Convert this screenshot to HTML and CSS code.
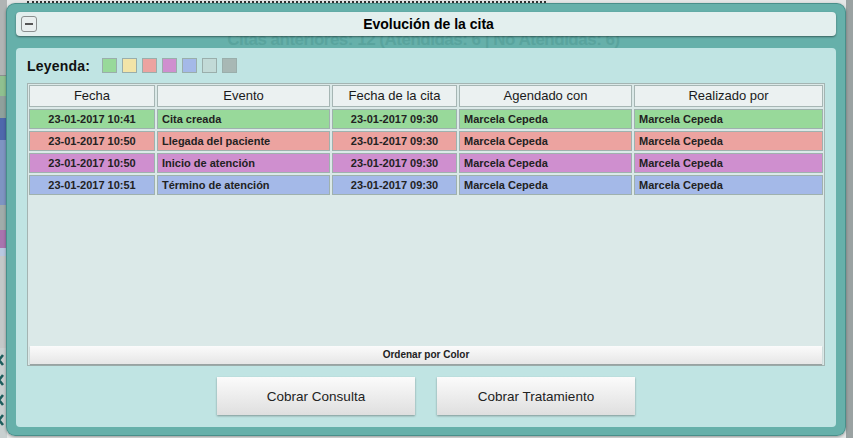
FILE: index.html
```html
<!DOCTYPE html>
<html lang="es">
<head>
<meta charset="utf-8">
<title>Evolución de la cita</title>
<link rel="stylesheet" href="styles.css">
</head>
<body>
<div class="page">
  <div class="strip-left">
    <span class="seg s-gray"></span>
    <span class="seg s-green"></span>
    <span class="seg s-sage"></span>
    <span class="seg s-navy"></span>
    <span class="seg s-blue"></span>
    <span class="seg s-grey2"></span>
    <span class="seg s-purple"></span>
    <span class="seg s-light"></span>
    <span class="seg s-grey3"></span>
    <span class="seg s-icons">
      <svg class="chev" width="7" height="12" viewBox="0 0 7 12"><path d="M5 1 L1 6 L5 11" fill="none" stroke="#1d5d5c" stroke-width="2.6"/></svg>
      <svg class="chev" width="7" height="12" viewBox="0 0 7 12"><path d="M5 1 L1 6 L5 11" fill="none" stroke="#1d5d5c" stroke-width="2.6"/></svg>
      <svg class="chev" width="7" height="12" viewBox="0 0 7 12"><path d="M5 1 L1 6 L5 11" fill="none" stroke="#1d5d5c" stroke-width="2.6"/></svg>
      <svg class="chev" width="7" height="12" viewBox="0 0 7 12"><path d="M5 1 L1 6 L5 11" fill="none" stroke="#1d5d5c" stroke-width="2.6"/></svg>
    </span>
  </div>
  <div class="page-main">
    <div class="page-top"></div>
    <h2 class="page-heading">Citas anteriores: 12 (Atendidas: 6 | No Atendidas: 6)</h2>
  </div>
  <div class="strip-right"></div>
</div>

<div class="modal">
  <div class="titlebar">
    <span class="minimize"><span class="minus"></span></span>
    <span class="title">Evolución de la cita</span>
    <span></span>
  </div>
  <div class="panel">
    <div class="legend">
      <span class="legend-label">Leyenda:</span>
      <span class="sw c-green"></span>
      <span class="sw c-yellow"></span>
      <span class="sw c-pink"></span>
      <span class="sw c-purple"></span>
      <span class="sw c-blue"></span>
      <span class="sw c-light"></span>
      <span class="sw c-gray"></span>
    </div>
    <div class="tablebox">
      <div class="grid">
        <div class="th">Fecha</div>
        <div class="th">Evento</div>
        <div class="th">Fecha de la cita</div>
        <div class="th">Agendado con</div>
        <div class="th">Realizado por</div>

        <div class="td center c-green">23-01-2017 10:41</div>
        <div class="td c-green">Cita creada</div>
        <div class="td center c-green">23-01-2017 09:30</div>
        <div class="td c-green">Marcela Cepeda</div>
        <div class="td c-green">Marcela Cepeda</div>

        <div class="td center c-pink">23-01-2017 10:50</div>
        <div class="td c-pink">Llegada del paciente</div>
        <div class="td center c-pink">23-01-2017 09:30</div>
        <div class="td c-pink">Marcela Cepeda</div>
        <div class="td c-pink">Marcela Cepeda</div>

        <div class="td center c-purple">23-01-2017 10:50</div>
        <div class="td c-purple">Inicio de atención</div>
        <div class="td center c-purple">23-01-2017 09:30</div>
        <div class="td c-purple">Marcela Cepeda</div>
        <div class="td c-purple">Marcela Cepeda</div>

        <div class="td center c-blue">23-01-2017 10:51</div>
        <div class="td c-blue">Término de atención</div>
        <div class="td center c-blue">23-01-2017 09:30</div>
        <div class="td c-blue">Marcela Cepeda</div>
        <div class="td c-blue">Marcela Cepeda</div>
      </div>
      <div class="sortbar">Ordenar por Color</div>
    </div>
    <div class="actions">
      <button class="btn">Cobrar Consulta</button>
      <button class="btn">Cobrar Tratamiento</button>
    </div>
  </div>
</div>
</body>
</html>
```

FILE: styles.css
```css
* { box-sizing: border-box; }

html, body {
  margin: 0;
  padding: 0;
  width: 853px;
  height: 438px;
  overflow: hidden;
  font-family: "Liberation Sans", Arial, sans-serif;
}

body { background: #d8dcdc; }

/* background page */
.page {
  display: flex;
  height: 438px;
}

.strip-left {
  width: 7px;
  display: flex;
  flex-direction: column;
}

.seg { display: block; }
.s-gray   { height: 76px;  background: #b0b4b4; border-bottom: 1px solid #8a9090; }
.s-green  { height: 20px;  background: #8fc08f; }
.s-sage   { height: 22px;  background: #8fa09c; }
.s-navy   { height: 22px;  background: #4e68ac; }
.s-blue   { height: 65px;  background: #7e94c2; }
.s-grey2  { height: 25px;  background: #a0acaa; }
.s-purple { height: 18px;  background: #a874ae; }
.s-light  { height: 8px;   background: #b8c8e0; }
.s-grey3  { height: 92px;  background: #c4c8c8; }
.s-icons  {
  flex: 1;
  background: #c8d0d0;
  display: flex;
  flex-direction: column;
  padding-top: 6px;
  gap: 8px;
}
.chev {
  display: block;
  margin-left: -2px;
}

.page-main {
  flex: 1;
  background: #e4e6e6;
}

.page-top {
  height: 3px;
  border-bottom: 2px dotted #333;
  margin: 0 300px 0 20px;
}

.page-heading {
  margin: 27px 0 0;
  text-align: center;
  font-size: 17px;
  font-weight: bold;
  line-height: 19px;
  color: #666;
  padding-right: 6px;
  letter-spacing: -0.5px;
}

.strip-right {
  width: 7px;
  background: #9aa2a2;
}

/* modal */
.modal {
  position: absolute;
  left: 6px;
  top: 3px;
  width: 840px;
  height: 433px;
  border-radius: 9px;
  background: rgba(88, 170, 163, 0.9);
  border: 1px solid rgba(70, 140, 135, 0.9);
  box-shadow: 0 1px 3px rgba(0, 0, 0, 0.35);
  padding: 8px 9px;
  display: flex;
  flex-direction: column;
  gap: 12px;
}

.titlebar {
  height: 24px;
  background: #e3efee;
  border-radius: 4px;
  box-shadow: 0 1px 2px rgba(0, 0, 0, 0.45);
  display: grid;
  grid-template-columns: 1fr auto 1fr;
  align-items: center;
  padding-left: 5px;
}

.minimize {
  width: 16px;
  height: 16px;
  border: 1px solid #8a8f8f;
  border-radius: 3px;
  background: #e9efef;
  display: flex;
  align-items: center;
  justify-content: center;
}
.minus {
  width: 8px;
  height: 2px;
  background: #555;
}

.title {
  font-size: 14px;
  font-weight: bold;
  color: #000;
}

.panel {
  flex: 1;
  background: #c0e4e3;
  border-radius: 4px;
  padding: 10px 11px 12px;
  display: flex;
  flex-direction: column;
}

.legend {
  height: 15px;
  display: flex;
  align-items: center;
  gap: 5px;
}
.legend-label {
  font-size: 14px;
  font-weight: bold;
  color: #111;
  letter-spacing: 0.2px;
  margin-right: 7px;
}
.sw {
  width: 15px;
  height: 15px;
  border: 1px solid #9aaeab;
}

.c-green  { background: #98d99a; }
.c-yellow { background: #f2e4a8; }
.c-pink   { background: #eca3a0; }
.c-purple { background: #cf8fcf; }
.c-blue   { background: #a4b9e8; }
.c-light  { background: #c2dad7; }
.c-gray   { background: #a8b8b5; }

.tablebox {
  margin-top: 10px;
  height: 283px;
  border: 1px solid #a4b4b2;
  background: #dbe9e8;
  padding: 1px;
  display: flex;
  flex-direction: column;
}

.grid {
  display: grid;
  grid-template-columns: 126px 173px 125px 173px 189px;
  grid-auto-rows: 20px;
  grid-template-rows: 22px;
  gap: 2px;
}

.th {
  border: 1px solid #a6b6b4;
  background: #ebf1f1;
  font-size: 13px;
  line-height: 20px;
  text-align: center;
  color: #1a1a1a;
}

.td {
  border: 1px solid #9fb1ae;
  font-size: 11px;
  font-weight: bold;
  line-height: 18px;
  padding: 0 4px;
  color: #222;
  white-space: nowrap;
}
.td.center { text-align: center; }

.sortbar {
  margin: auto 1px 0;
  height: 18px;
  background: linear-gradient(#fbfbfb, #e6e6e6);
  box-shadow: 0 1px 1px rgba(0, 0, 0, 0.3);
  font-size: 10px;
  font-weight: bold;
  line-height: 18px;
  text-align: center;
  color: #222;
}

.actions {
  margin-top: 11px;
  display: flex;
  justify-content: center;
  gap: 22px;
}

.btn {
  width: 198px;
  height: 38px;
  border: none;
  background: linear-gradient(#fbfbfb, #dfdfdf);
  box-shadow: 0 1px 2px rgba(0, 0, 0, 0.35);
  font-family: "Liberation Sans", Arial, sans-serif;
  font-size: 13.5px;
  color: #222;
  padding: 0;
}
```
